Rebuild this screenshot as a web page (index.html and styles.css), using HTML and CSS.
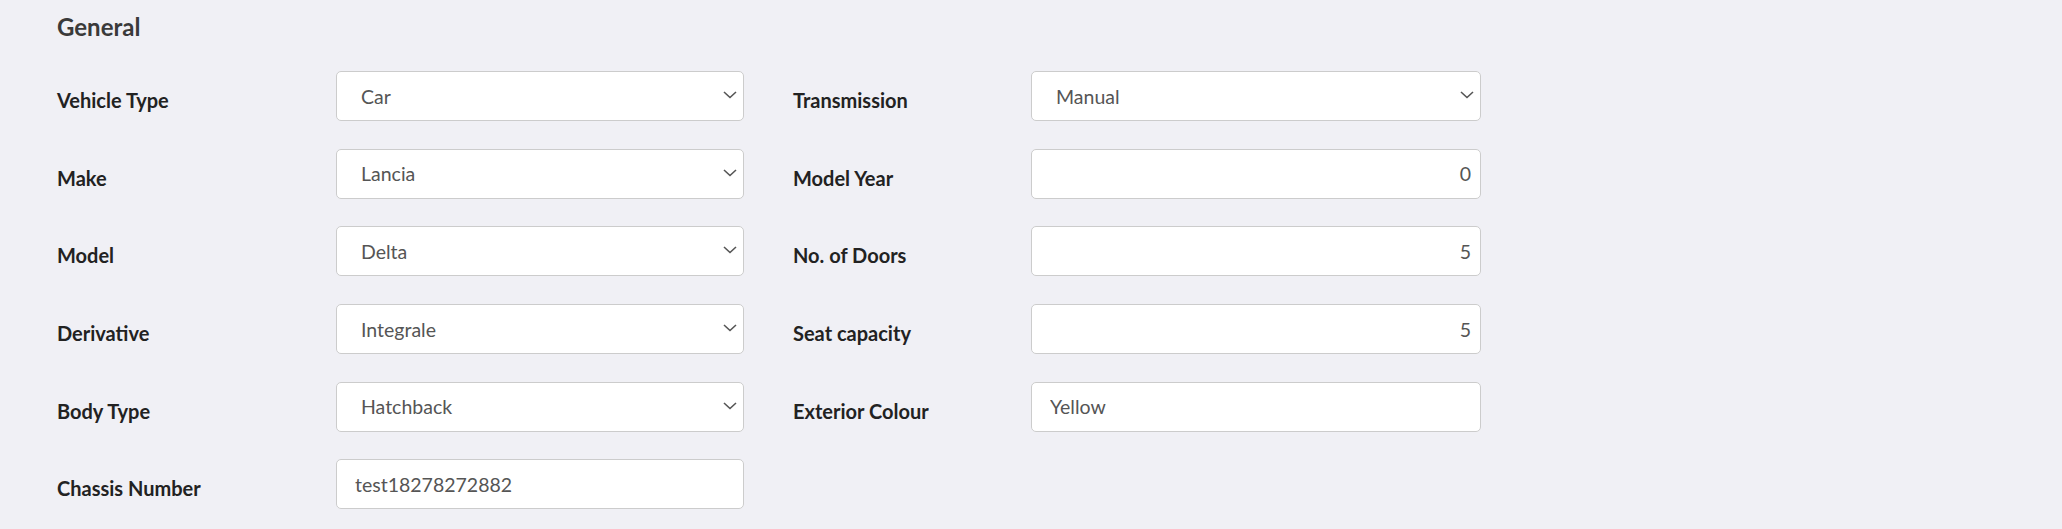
FILE: index.html
```html
<!DOCTYPE html>
<html lang="en">
<head>
  <meta charset="UTF-8" />
  <meta name="viewport" content="width=device-width, initial-scale=1.0" />
  <title>Vehicle | General</title>
  <link rel="stylesheet" href="styles.css">
</head>
<body>
  <div class="section">
    <h3 class="section-title">General</h3>
    <form class="form-grid">
      <div class="form-col">
        <div class="form-row">
          <label for="vehicleType">Vehicle Type</label>
          <div class="select-wrap">
            <select id="vehicleType" class="form-control"><option>Car</option></select>
            <svg class="chevron" width="14" height="8" viewBox="0 0 14 8"><path d="M1 1l6 5.5L13 1" fill="none" stroke="#555" stroke-width="1.6"/></svg>
          </div>
        </div>
        <div class="form-row">
          <label for="make">Make</label>
          <div class="select-wrap">
            <select id="make" class="form-control"><option>Lancia</option></select>
            <svg class="chevron" width="14" height="8" viewBox="0 0 14 8"><path d="M1 1l6 5.5L13 1" fill="none" stroke="#555" stroke-width="1.6"/></svg>
          </div>
        </div>
        <div class="form-row">
          <label for="model">Model</label>
          <div class="select-wrap">
            <select id="model" class="form-control"><option>Delta</option></select>
            <svg class="chevron" width="14" height="8" viewBox="0 0 14 8"><path d="M1 1l6 5.5L13 1" fill="none" stroke="#555" stroke-width="1.6"/></svg>
          </div>
        </div>
        <div class="form-row">
          <label for="derivative">Derivative</label>
          <div class="select-wrap">
            <select id="derivative" class="form-control"><option>Integrale</option></select>
            <svg class="chevron" width="14" height="8" viewBox="0 0 14 8"><path d="M1 1l6 5.5L13 1" fill="none" stroke="#555" stroke-width="1.6"/></svg>
          </div>
        </div>
        <div class="form-row">
          <label for="bodyType">Body Type</label>
          <div class="select-wrap">
            <select id="bodyType" class="form-control"><option>Hatchback</option></select>
            <svg class="chevron" width="14" height="8" viewBox="0 0 14 8"><path d="M1 1l6 5.5L13 1" fill="none" stroke="#555" stroke-width="1.6"/></svg>
          </div>
        </div>
        <div class="form-row">
          <label for="chassis">Chassis Number</label>
          <input id="chassis" class="form-control" type="text" value="test18278272882" />
        </div>
      </div>

      <div class="form-col form-col-right">
        <div class="form-row">
          <label for="transmission">Transmission</label>
          <div class="select-wrap">
            <select id="transmission" class="form-control"><option>Manual</option></select>
            <svg class="chevron" width="14" height="8" viewBox="0 0 14 8"><path d="M1 1l6 5.5L13 1" fill="none" stroke="#555" stroke-width="1.6"/></svg>
          </div>
        </div>
        <div class="form-row">
          <label for="modelYear">Model Year</label>
          <input id="modelYear" class="form-control number" type="text" value="0" />
        </div>
        <div class="form-row">
          <label for="doors">No. of Doors</label>
          <input id="doors" class="form-control number" type="text" value="5" />
        </div>
        <div class="form-row">
          <label for="seats">Seat capacity</label>
          <input id="seats" class="form-control number" type="text" value="5" />
        </div>
        <div class="form-row">
          <label for="colour">Exterior Colour</label>
          <input id="colour" class="form-control" type="text" value="Yellow" />
        </div>
      </div>
    </form>
  </div>
</body>
</html>
```

FILE: styles.css
```css
body {
  margin: 0;
  font-family: Lato, 'Liberation Sans', sans-serif;
  background-color: #F0F0F5;
  color: #222;
}
.section {
  padding: 12px 0 0 57px;
}
.section-title {
  margin: 0;
  font-size: 24px;
  line-height: 29px;
  font-weight: 700;
  color: #3A3A3A;
}
.form-grid {
  display: grid;
  grid-template-columns: 687px 688px;
  column-gap: 49px;
  margin-top: 30px;
}
.form-col {
  display: flex;
  flex-direction: column;
  gap: 27.7px;
}
.form-row {
  display: grid;
  grid-template-columns: 279px 408px;
  align-items: start;
}
.form-col-right .form-row {
  grid-template-columns: 238px 450px;
}
.form-row label {
  font-size: 20px;
  line-height: 24px;
  font-weight: 700;
  padding-top: 17px;
  color: #222;
}
.form-control {
  box-sizing: border-box;
  width: 100%;
  height: 50px;
  margin: 0;
  padding: 0 18px;
  font-family: Lato, 'Liberation Sans', sans-serif;
  font-size: 19.5px;
  color: #555;
  background: #fff;
  border: 1px solid #CCC;
  border-radius: 5px;
  outline: none;
}
.form-control.number {
  text-align: right;
  padding-right: 9px;
}
.select-wrap {
  position: relative;
}
.select-wrap select {
  appearance: none;
  -webkit-appearance: none;
  padding-left: 24px;
  padding-right: 40px;
}
.chevron {
  position: absolute;
  right: 7px;
  top: 20px;
  pointer-events: none;
}
```
